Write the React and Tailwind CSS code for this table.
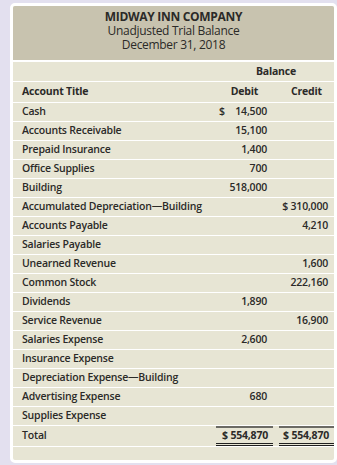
const rows = [
  { title: 'Cash', debit: '14,500', dollarDebit: true },
  { title: 'Accounts Receivable', debit: '15,100' },
  { title: 'Prepaid Insurance', debit: '1,400' },
  { title: 'Office Supplies', debit: '700' },
  { title: 'Building', debit: '518,000' },
  { title: 'Accumulated Depreciation\u2014Building', credit: '$ 310,000' },
  { title: 'Accounts Payable', credit: '4,210' },
  { title: 'Salaries Payable' },
  { title: 'Unearned Revenue', credit: '1,600' },
  { title: 'Common Stock', credit: '222,160' },
  { title: 'Dividends', debit: '1,890' },
  { title: 'Service Revenue', credit: '16,900' },
  { title: 'Salaries Expense', debit: '2,600' },
  { title: 'Insurance Expense' },
  { title: 'Depreciation Expense\u2014Building' },
  { title: 'Advertising Expense', debit: '680' },
  { title: 'Supplies Expense' },
];

function Row({ title, debit, credit, dollarDebit }) {
  return (
    <div className="flex h-[19px] items-center border-b border-white">
      <div className="flex-1 pl-[9px]">{title}</div>
      <div className="w-[57px] pr-[6px] text-right">
        {dollarDebit ? (
          <div className="flex justify-between pl-[3px]">
            <span>$</span>
            <span>{debit}</span>
          </div>
        ) : (
          debit
        )}
      </div>
      <div className="ml-[6px] w-[55px] pr-[6px] text-right">{credit}</div>
    </div>
  );
}

export default function App() {
  return (
    <div
      className="min-h-[465px] bg-[#e3e0ef] pl-[10px] pt-[3px] pb-[2px] text-[#2b2a28]"
      style={{ fontFamily: '"Open Sans", "Noto Sans", sans-serif' }}
    >
      <div className="w-[327px] overflow-hidden rounded-[5px] border-[3px] border-white bg-[#e7e5d4] text-[10.5px] font-semibold tracking-[-0.2px]">
        <div className="flex h-[56px] flex-col items-center border-b-2 border-white bg-[#c8c3af] pt-[4px] text-[12px] leading-[14px] tracking-[-0.3px]">
          <div className="font-bold">MIDWAY INN COMPANY</div>
          <div className="font-normal">Unadjusted Trial Balance</div>
          <div className="font-normal">December 31, 2018</div>
        </div>

        <div className="flex h-[20px] items-center border-b border-white font-bold">
          <div className="flex-1" />
          <div className="w-[124px] pl-[8px] text-center">Balance</div>
        </div>
        <div className="flex h-[21px] items-center border-b border-white font-bold">
          <div className="flex-1 pl-[9px]">Account Title</div>
          <div className="w-[57px] text-center">Debit</div>
          <div className="ml-[6px] w-[55px] text-center">Credit</div>
        </div>

        {rows.map((r) => (
          <Row key={r.title} {...r} />
        ))}

        <div className="flex h-[21px] items-stretch border-b border-white">
          <div className="flex flex-1 items-center pl-[9px]">Total</div>
          <div className="flex w-[57px] items-center justify-end border-t-2 border-b-[3px] border-double border-t-[#6b6a64] border-b-[#1f1f1f] pr-[5px] font-bold">
            $ 554,870
          </div>
          <div className="ml-[6px] flex w-[55px] items-center justify-end border-t-2 border-b-[3px] border-double border-t-[#6b6a64] border-b-[#1f1f1f] pr-[5px] font-bold">
            $ 554,870
          </div>
        </div>
        <div className="h-[13px]" />
      </div>
    </div>
  );
}
